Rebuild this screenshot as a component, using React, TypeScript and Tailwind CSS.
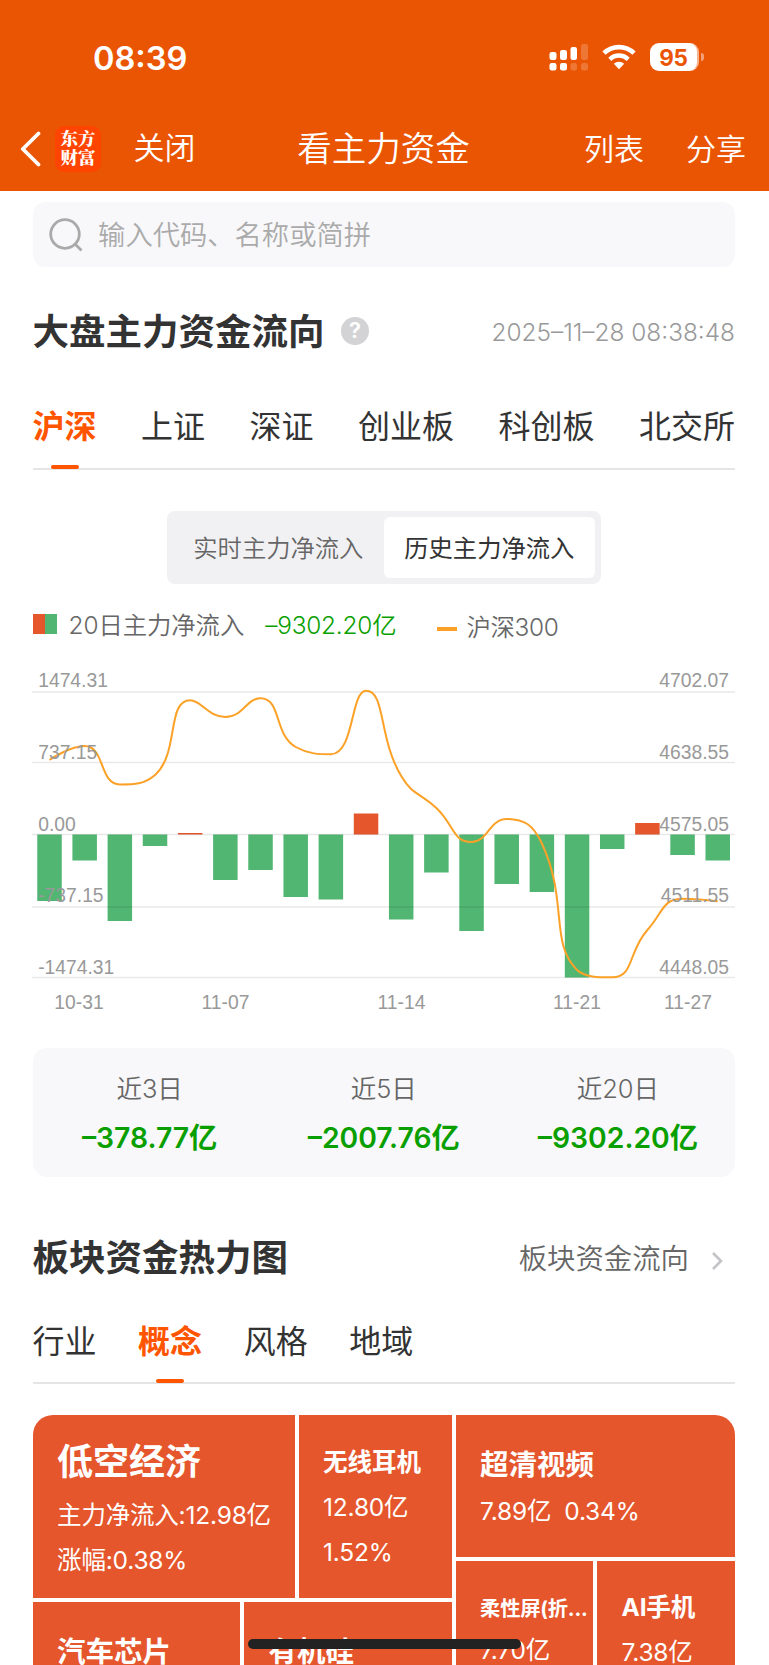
import React from 'react';

const FONT = "font-['Inter','Noto_Sans_CJK_SC',sans-serif]";

const markets = ['沪深', '上证', '深证', '创业板', '科创板', '北交所'];
const sectors = ['行业', '概念', '风格', '地域'];

const summary = [
  { label: '近3日', value: '–378.77亿' },
  { label: '近5日', value: '–2007.76亿' },
  { label: '近20日', value: '–9302.20亿' },
];

// Chart geometry, in px inside the 703 x 360 drawing
const ZERO_Y = 174.5;
const FIRST_X = 17.5;
const STEP = 35.17;
const BAR_W = 24.5;

// Bar ends relative to the zero line: positive goes down (outflow)
const flows = [66.5, 26, 86.5, 11.5, -1.5, 45.5, 35.5, 62.5, 65, -21, 85, 38, 96.5, 49.5, 57.5, 143, 14.5, -11.5, 20.5, 26];
const indexY = [100, 86, 124.5, 115, 40.3, 57, 38.3, 87, 94.3, 30.7, 116, 148, 182, 159, 183.5, 310, 317.3, 270, 238.7, 241.2];

const gridY = [32, 102.5, 174.5, 247, 317.5];
const leftLabels = ['1474.31', '737.15', '0.00', '-737.15', '-1474.31'];
const rightLabels = ['4702.07', '4638.55', '4575.05', '4511.55', '4448.05'];
const labelY = [27, 98.5, 170.5, 242, 313.5];
const dates = [
  { text: '10-31', x: 47 },
  { text: '11-07', x: 193.5 },
  { text: '11-14', x: 369.5 },
  { text: '11-21', x: 545 },
  { text: '11-27', x: 656 },
];

const clamp = (v: number, a: number, b: number) => Math.max(Math.min(a, b), Math.min(Math.max(a, b), v));

// Smooth curve whose control points never leave the box of their segment
function smoothPath(pts: number[][], smooth = 0.5) {
  let d = `M${pts[0][0]} ${pts[0][1]}`;
  let out = pts[0];
  for (let i = 1; i < pts.length; i++) {
    const [x, y] = pts[i];
    const prev = pts[i - 1];
    const next = pts[i + 1];
    let cp = [x, y];
    let nextOut = [x, y];
    if (next) {
      const lenPrev = Math.hypot(x - prev[0], y - prev[1]);
      const lenNext = Math.hypot(next[0] - x, next[1] - y);
      const ratio = lenNext / (lenNext + lenPrev);
      nextOut = [0, 1].map(k => clamp(pts[i][k] + (next[k] - prev[k]) * smooth * ratio, next[k], pts[i][k]));
      cp = [0, 1].map(k => clamp(pts[i][k] - ((nextOut[k] - pts[i][k]) * lenPrev) / lenNext, prev[k], pts[i][k]));
      nextOut = [0, 1].map(k => pts[i][k] + ((pts[i][k] - cp[k]) * lenNext) / lenPrev);
    }
    d += `C${out[0]} ${out[1]} ${cp[0]} ${cp[1]} ${x} ${y}`;
    out = nextOut;
  }
  return d;
}

function StatusBar() {
  return (
    <div className="flex h-[106px] items-center justify-between pt-2 pr-[65px] pl-[93px] text-white">
      <span className="pt-px text-[32.6px] leading-10 font-semibold">08:39</span>
      <div className="flex items-center">
        <svg width="39" height="28" viewBox="0 0 39 28" fill="#fff">
          <rect x="0.5" y="9" width="7" height="8" rx="2.2" />
          <rect x="11" y="7" width="7" height="10" rx="2.2" />
          <rect x="21.5" y="4" width="6.5" height="13" rx="2.2" />
          <rect x="32" y="1" width="7" height="16" rx="2.2" opacity="0.2" />
          <rect x="0.5" y="20" width="7" height="7.5" rx="2.2" />
          <rect x="11" y="20" width="7" height="7.5" rx="2.2" />
          <rect x="21.5" y="20" width="6.5" height="7.5" rx="2.2" opacity="0.2" />
          <rect x="32" y="20" width="7" height="7.5" rx="2.2" opacity="0.2" />
        </svg>
        <svg className="ml-[14px]" width="34" height="26" viewBox="0 0 34 26" fill="none" stroke="#fff">
          <path d="M2 9.2A21.5 21.5 0 0 1 32 9.2" strokeWidth="4.6" />
          <path d="M7.8 15.3A13.2 13.2 0 0 1 26.2 15.3" strokeWidth="4.4" />
          <path d="M17 25.2l5.2-5.4a7.4 7.4 0 0 0-10.4 0z" fill="#fff" stroke="none" />
        </svg>
        <div className="ml-[14px] flex items-center gap-[2px]">
          <div className="flex h-[28px] w-[49px] items-center justify-center rounded-[9px] border-r-2 border-[#f7b48f] bg-white pt-px text-[22.5px] font-bold tracking-[-0.3px] text-[#ea5504]">
            95
          </div>
          <div className="h-[8px] w-[3px] rounded-r-full bg-[#f3a078]" />
        </div>
      </div>
    </div>
  );
}

function NavBar() {
  return (
    <div className="relative flex h-[85px] items-center pr-[23px] pl-[20px] text-white">
      <svg width="21" height="36" viewBox="0 0 21 36" fill="none" stroke="#fff" strokeWidth="3.8" strokeLinecap="round" strokeLinejoin="round">
        <path d="M18.5 2.5L2.8 18l15.7 15.5" />
      </svg>
      <div className="ml-[14px] flex size-[46px] flex-col items-center rounded-[9px] bg-[#ff4400] pt-[2px] text-[17.5px] leading-[19.5px] font-black font-['Noto_Serif_CJK_SC','Noto_Sans_CJK_SC',sans-serif]">
        <span>东方</span>
        <span>财富</span>
      </div>
      <span className="ml-[32.5px] text-[31px] font-[350]">关闭</span>
      <span className="absolute left-1/2 -ml-px -translate-x-1/2 pt-px text-[34.5px] font-[350] whitespace-nowrap">看主力资金</span>
      <span className="ml-auto pt-px text-[30px] font-[350]">列表</span>
      <span className="ml-[42px] pt-px text-[30px] font-[350]">分享</span>
    </div>
  );
}

function Tab({ name, active }: { name: string; active: boolean }) {
  return (
    <div className={`relative h-full text-[32px] ${active ? 'font-bold text-[#ff5500]' : 'text-[#333]'}`}>
      {name}
      {active && <div className="absolute -bottom-px left-1/2 h-1 w-7 -translate-x-1/2 rounded-full bg-[#ff5500]" />}
    </div>
  );
}

function FlowChart() {
  const pts = indexY.map((y, i) => [FIRST_X + i * STEP, y]);
  return (
    <svg className="block" width="703" height="360" viewBox="0 0 703 360">
      {flows.map((h, i) => (
        <rect
          key={i}
          x={FIRST_X + i * STEP - BAR_W / 2}
          y={h > 0 ? ZERO_Y : ZERO_Y + h}
          width={BAR_W}
          height={Math.abs(h)}
          fill={h > 0 ? '#51b672' : '#e5562c'}
        />
      ))}
      {gridY.map(y => (
        <line key={y} x1="0" x2="703" y1={y} y2={y} stroke="#000" strokeOpacity="0.09" strokeWidth="1.4" />
      ))}
      <path d={smoothPath(pts)} fill="none" stroke="#fba127" strokeWidth="2" strokeLinejoin="round" />
      <g fill="#999" fontSize="19.3" fontFamily="'Liberation Sans', Arial, sans-serif">
        {leftLabels.map((t, i) => (
          <text key={t} x="6.2" y={labelY[i]}>{t}</text>
        ))}
        {rightLabels.map((t, i) => (
          <text key={t} x="697" y={labelY[i]} textAnchor="end">{t}</text>
        ))}
        {dates.map(d => (
          <text key={d.text} x={d.x} y="349" textAnchor="middle">{d.text}</text>
        ))}
      </g>
    </svg>
  );
}

function HeatMap() {
  return (
    <div className="flex h-[300px] gap-1 overflow-hidden rounded-t-[20px] text-[24.5px] tracking-[-0.2px] text-white">
      <div className="flex w-[419px] flex-col gap-1">
        <div className="flex h-[183px] gap-1">
          <div className="w-[262px] bg-[#e5562c] pt-[24px] pl-[24.5px] whitespace-nowrap">
            <div className="h-[53px] text-[36px] leading-[46px] font-bold tracking-normal">低空经济</div>
            <div className="h-[45px] leading-[46px]">主力净流入:12.98亿</div>
            <div className="leading-[46px]">涨幅:0.38%</div>
          </div>
          <div className="w-[153px] bg-[#e5562c] pt-[24px] pl-[24.5px]">
            <div className="h-[45px] leading-[46px] font-bold tracking-normal">无线耳机</div>
            <div className="h-[45px] leading-[46px]">12.80亿</div>
            <div className="leading-[46px]">1.52%</div>
          </div>
        </div>
        <div className="flex flex-1 gap-1 text-[28.5px] leading-[46px] font-bold tracking-normal">
          <div className="w-[207.5px] bg-[#e5562c] pt-[27px] pl-[24.5px]">汽车芯片</div>
          <div className="flex-1 bg-[#e5562c] pt-[27px] pl-[24.5px]">有机硅</div>
        </div>
      </div>
      <div className="flex flex-1 flex-col gap-1">
        <div className="h-[142px] bg-[#e5562c] pt-[27px] pl-[24.5px]">
          <div className="h-[46px] text-[28.5px] leading-[46px] font-bold tracking-normal">超清视频</div>
          <div className="flex gap-[13px] leading-[46px]">
            <span>7.89亿</span>
            <span>0.34%</span>
          </div>
        </div>
        <div className="flex flex-1 gap-1">
          <div className="w-[137.5px] bg-[#e5562c] pt-[24.5px] pl-[24.5px] whitespace-nowrap">
            <div className="h-[41px] text-[20.3px] leading-[46px] font-bold">柔性屏(折...</div>
            <div className="leading-[46px]">7.70亿</div>
          </div>
          <div className="flex-1 bg-[#e5562c] pt-[23px] pl-[24.5px]">
            <div className="h-[45px] leading-[46px] font-bold">AI手机</div>
            <div className="leading-[46px]">7.38亿</div>
          </div>
        </div>
      </div>
    </div>
  );
}

export default function App() {
  return (
    <div className={`relative h-[1665px] w-[769px] overflow-hidden bg-white text-[#333] ${FONT}`}>
      <header className="h-[191px] bg-[#ea5504]">
        <StatusBar />
        <NavBar />
      </header>

      <main className="pr-[34px] pl-[32.6px]">
        {/* Search */}
        <div className="mt-[11px] flex h-[65px] items-center rounded-[12px] bg-[#f8f8fa] pl-4">
          <svg width="34" height="34" viewBox="0 0 34 34" fill="none" stroke="#aaa" strokeWidth="2.8">
            <circle cx="16" cy="16" r="14.3" />
            <path d="M26 26l6.5 6.5" />
          </svg>
          <span className="ml-[15.5px] pt-[3px] text-[27.3px] font-[350] text-[#aaa]">输入代码、名称或简拼</span>
        </div>

        {/* Market flow heading */}
        <div className="mt-[35px] flex h-[60px] items-center">
          <h2 className="pt-px text-[36.5px] font-bold">大盘主力资金流向</h2>
          <div className="mb-[3px] ml-[16.5px] flex size-7 items-center justify-center rounded-full bg-[#d3d3d6] text-[22px] font-semibold text-white">?</div>
          <span className="ml-auto text-[24.4px] font-[350] text-[#999]">2025–11–28 08:38:48</span>
        </div>

        <div className="mt-[36px] flex h-[72px] justify-between border-b-2 border-[#e5e5e5] leading-[58px]">
          {markets.map(m => (
            <Tab key={m} name={m} active={m === '沪深'} />
          ))}
        </div>

        {/* Realtime / history switch */}
        <div className="mx-auto mt-[41px] flex h-[73px] w-[434px] rounded-lg bg-[#f1f1f4] p-[6px] text-[24.3px] leading-[63px]">
          <div className="w-[211px] pl-[20.5px] font-[350] text-[#666]">实时主力净流入</div>
          <div className="h-[61px] w-[211px] rounded-md bg-white text-center">历史主力净流入</div>
        </div>

        {/* Legend */}
        <div className="mt-[20px] flex h-[42px] items-center text-[24.4px] font-[350] text-[#666]">
          <div className="mb-[2px] flex h-[20px] w-[24.5px]">
            <div className="w-1/2 bg-[#e5562c]" />
            <div className="w-1/2 bg-[#51b672]" />
          </div>
          <span className="ml-[11.5px] tracking-[-0.1px]">20日主力净流入</span>
          <span className="ml-[21px] tracking-[-0.2px] text-[#0a9f00]">–9302.20亿</span>
          <div className="mt-[8px] ml-[40.5px] h-[4px] w-[20px] bg-[#fba127]" />
          <span className="mt-[4px] ml-[9.5px] tracking-[-0.3px]">沪深300</span>
        </div>

        <div className="-ml-[0.6px] mt-[14px]">
          <FlowChart />
        </div>

        {/* Period totals */}
        <div className="mt-[28px] grid h-[129px] grid-cols-3 rounded-[14px] bg-[#f8f8fa] pt-[16px] text-center">
          {summary.map(s => (
            <div key={s.label}>
              <div className="h-[50px] text-[25.5px] leading-[49px] font-[350] text-[#666]">{s.label}</div>
              <div className="text-[28.3px] leading-[48px] font-semibold text-[#0a9f00]">{s.value}</div>
            </div>
          ))}
        </div>

        {/* Sector heat map */}
        <div className="mt-[51px] flex h-[60px] items-center">
          <h2 className="pt-px text-[36.5px] font-bold">板块资金热力图</h2>
          <span className="ml-auto pt-[2px] text-[28.4px] font-[350] text-[#666]">板块资金流向</span>
          <svg className="mt-[6px] mr-[12px] ml-[22px]" width="12" height="18" viewBox="0 0 12 18" fill="none" stroke="#c4c4c8" strokeWidth="2.6">
            <path d="M2 1l8 8-8 8" />
          </svg>
        </div>

        <div className="mt-[25px] flex h-[71px] gap-[41.5px] border-b-2 border-[#e5e5e5] leading-[58px]">
          {sectors.map(s => (
            <Tab key={s} name={s} active={s === '概念'} />
          ))}
        </div>

        <div className="mt-[31px]">
          <HeatMap />
        </div>
      </main>

      {/* Home indicator */}
      <div className="absolute top-[1639px] left-[248px] h-[10px] w-[273px] rounded-full bg-[#222]" />
    </div>
  );
}
